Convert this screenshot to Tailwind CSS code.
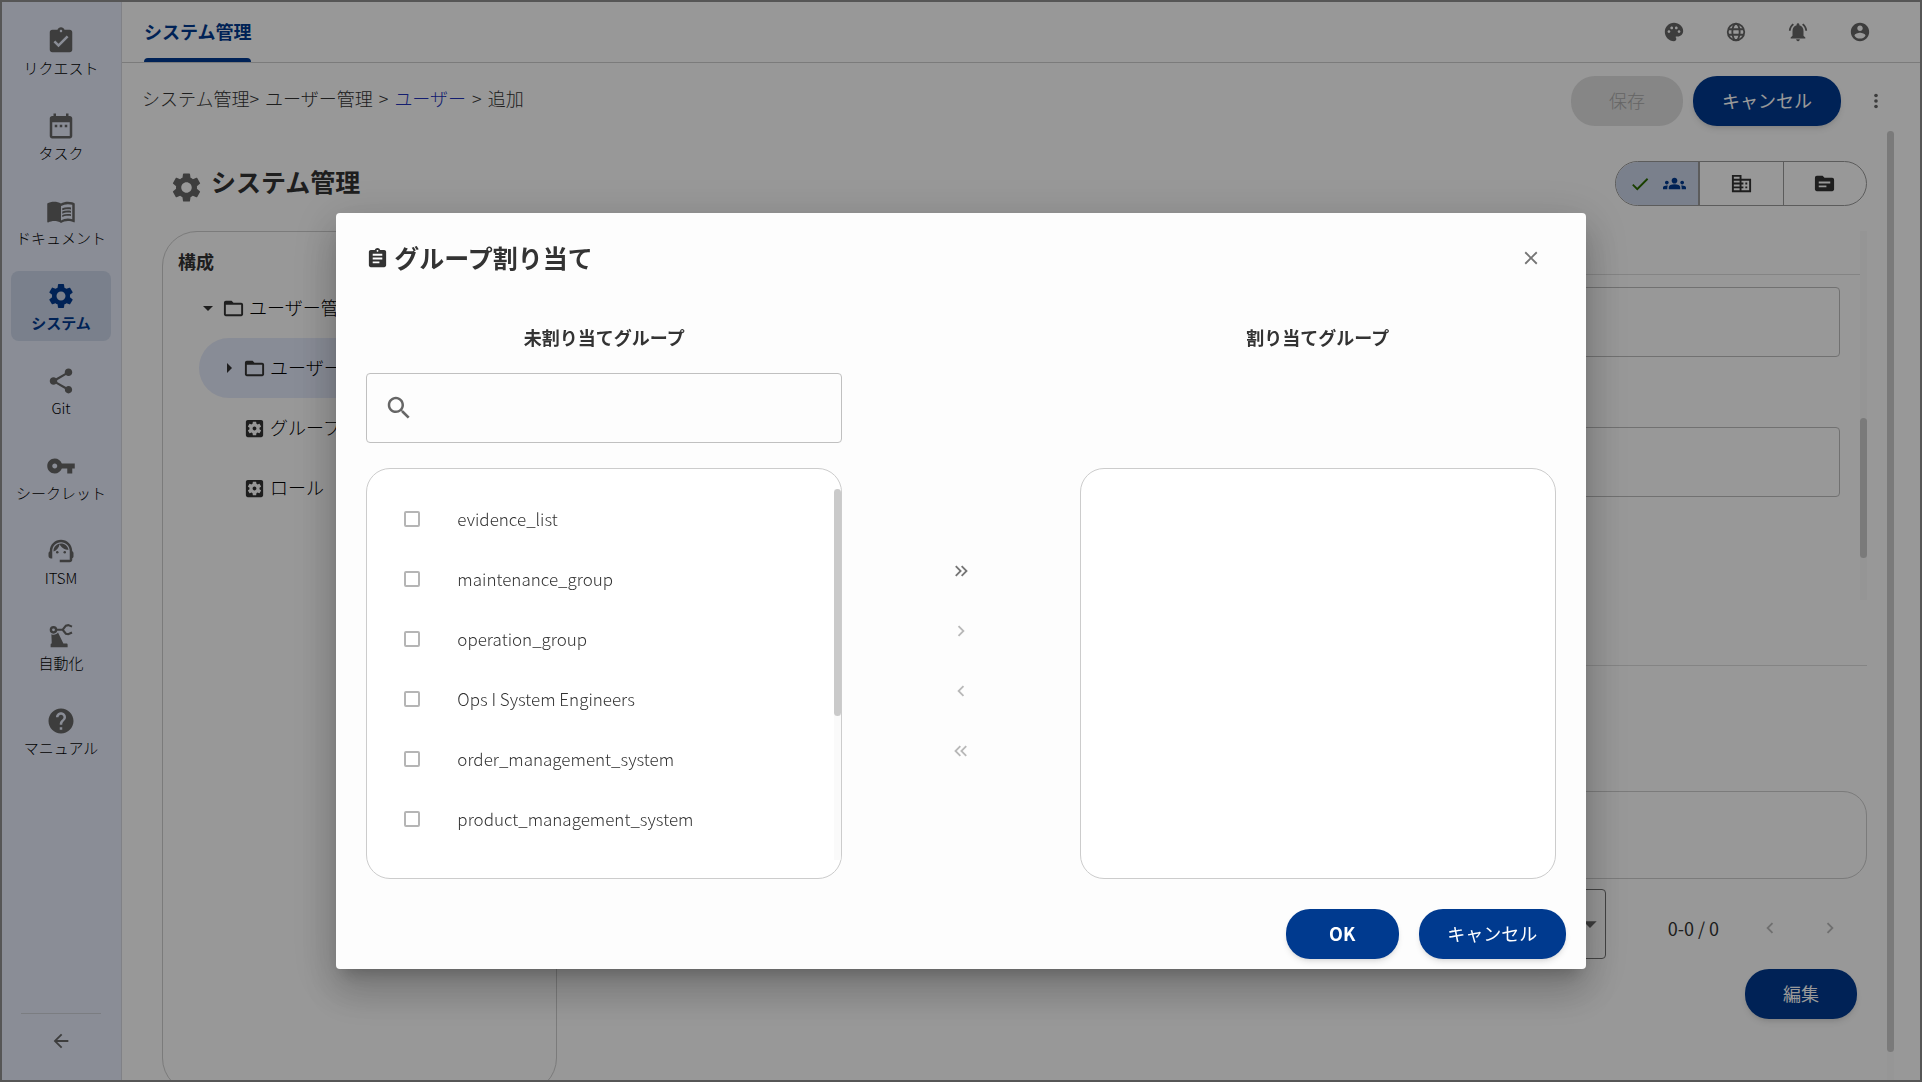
<!DOCTYPE html>
<html lang="ja">
<head>
<meta charset="utf-8">
<title>システム管理</title>
<script src="https://cdn.jsdelivr.net/npm/@tailwindcss/browser@4"></script>
</head>
<body class="bg-[#fdfdfd] font-['Noto_Sans_CJK_JP',sans-serif] text-lg leading-7 text-[#333]">

<svg class="hidden" aria-hidden="true">
  <symbol id="i-request" viewBox="0 0 24 24"><path d="M19 3h-4.18C14.4 1.84 13.3 1 12 1c-1.3 0-2.4.84-2.82 2H5c-1.1 0-2 .9-2 2v14c0 1.1.9 2 2 2h14c1.1 0 2-.9 2-2V5c0-1.1-.9-2-2-2zm-7 0c.55 0 1 .45 1 1s-.45 1-1 1-1-.45-1-1 .45-1 1-1zm-2 14l-4-4 1.41-1.41L10 14.17l6.59-6.59L18 9l-8 8z"/></symbol>
  <symbol id="i-assignment" viewBox="0 0 24 24"><path d="M19 3h-4.18C14.4 1.84 13.3 1 12 1c-1.3 0-2.4.84-2.82 2H5c-1.1 0-2 .9-2 2v14c0 1.1.9 2 2 2h14c1.1 0 2-.9 2-2V5c0-1.1-.9-2-2-2zm-7 0c.55 0 1 .45 1 1s-.45 1-1 1-1-.45-1-1 .45-1 1-1zm2 14H7v-2h7v2zm3-4H7v-2h10v2zm0-4H7V7h10v2z"/></symbol>
  <symbol id="i-task" viewBox="0 0 24 24"><path d="M9 11H7v2h2v-2zm4 0h-2v2h2v-2zm4 0h-2v2h2v-2zm2-7h-1V2h-2v2H8V2H6v2H5c-1.11 0-1.99.9-1.99 2L3 20c0 1.1.89 2 2 2h14c1.1 0 2-.9 2-2V6c0-1.1-.9-2-2-2zm0 16H5V9h14v11z"/></symbol>
  <symbol id="i-book" viewBox="0 0 24 24"><path d="M21 5c-1.11-.35-2.33-.5-3.5-.5-1.95 0-4.05.4-5.5 1.5-1.45-1.1-3.55-1.5-5.5-1.5S2.45 4.9 1 6v14.65c0 .25.25.5.5.5.1 0 .15-.05.25-.05C3.1 20.45 5.05 20 6.5 20c1.95 0 4.05.4 5.5 1.5 1.35-.85 3.8-1.5 5.5-1.5 1.65 0 3.35.3 4.75 1.05.1.05.15.05.25.05.25 0 .5-.25.5-.5V6c-.6-.45-1.25-.75-2-1zm0 13.5c-1.1-.35-2.3-.5-3.5-.5-1.7 0-4.15.65-5.5 1.5V8c1.35-.85 3.8-1.5 5.5-1.5 1.2 0 2.4.15 3.5.5v11.5z"/><path d="M17.5 10.5c.88 0 1.73.09 2.5.26V9.24c-.79-.15-1.64-.24-2.5-.24-1.7 0-3.24.29-4.5.83v1.66c1.13-.64 2.7-.99 4.5-.99zM13 12.49v1.66c1.13-.64 2.7-.99 4.5-.99.88 0 1.73.09 2.5.26V11.9c-.79-.15-1.64-.24-2.5-.24-1.7 0-3.24.3-4.5.83zm4.5 1.84c-1.7 0-3.24.29-4.5.83v1.66c1.13-.64 2.7-.99 4.5-.99.88 0 1.73.09 2.5.26v-1.52c-.79-.16-1.64-.24-2.5-.24z"/></symbol>
  <symbol id="i-gear" viewBox="0 0 24 24"><path d="M19.14 12.94c.04-.3.06-.61.06-.94 0-.32-.02-.64-.07-.94l2.03-1.58c.18-.14.23-.41.12-.61l-1.92-3.32c-.12-.22-.37-.29-.59-.22l-2.39.96c-.5-.38-1.03-.7-1.62-.94l-.36-2.54c-.04-.24-.24-.41-.48-.41h-3.84c-.24 0-.43.17-.47.41l-.36 2.54c-.59.24-1.13.57-1.62.94l-2.39-.96c-.22-.08-.47 0-.59.22L2.74 8.87c-.12.21-.08.47.12.61l2.03 1.58c-.05.3-.09.63-.09.94s.02.64.07.94l-2.03 1.58c-.18.14-.23.41-.12.61l1.92 3.32c.12.22.37.29.59.22l2.39-.96c.5.38 1.03.7 1.62.94l.36 2.54c.05.24.24.41.48.41h3.84c.24 0 .44-.17.47-.41l.36-2.54c.59-.24 1.13-.56 1.62-.94l2.39.96c.22.08.47 0 .59-.22l1.92-3.32c.12-.22.07-.47-.12-.61l-2.01-1.58zM12 15.6c-1.98 0-3.6-1.62-3.6-3.6s1.62-3.6 3.6-3.6 3.6 1.62 3.6 3.6-1.62 3.6-3.6 3.6z"/></symbol>
  <symbol id="i-share" viewBox="0 0 24 24"><path d="M18 16.08c-.76 0-1.44.3-1.96.77L8.91 12.7c.05-.23.09-.46.09-.7s-.04-.47-.09-.7l7.05-4.11c.54.5 1.25.81 2.04.81 1.66 0 3-1.34 3-3s-1.34-3-3-3-3 1.34-3 3c0 .24.04.47.09.7L8.04 9.81C7.5 9.31 6.79 9 6 9c-1.66 0-3 1.34-3 3s1.34 3 3 3c.79 0 1.5-.31 2.04-.81l7.12 4.16c-.05.21-.08.43-.08.65 0 1.61 1.31 2.92 2.92 2.92 1.61 0 2.92-1.31 2.92-2.92s-1.31-2.92-2.92-2.92z"/></symbol>
  <symbol id="i-key" viewBox="0 0 24 24"><path d="M12.65 10C11.83 7.67 9.61 6 7 6c-3.31 0-6 2.69-6 6s2.69 6 6 6c2.61 0 4.83-1.67 5.65-4H17v4h4v-4h2v-4H12.65zM7 14c-1.1 0-2-.9-2-2s.9-2 2-2 2 .9 2 2-.9 2-2 2z"/></symbol>
  <symbol id="i-agent" viewBox="0 0 24 24"><path d="M21 12.22C21 6.73 16.74 3 12 3c-4.69 0-9 3.65-9 9.28-.6.34-1 .98-1 1.72v2c0 1.1.9 2 2 2h1v-6.1c0-3.87 3.13-7 7-7s7 3.13 7 7V19h-8v2h8c1.1 0 2-.9 2-2v-1.22c.59-.31 1-.92 1-1.64v-2.3c0-.7-.41-1.31-1-1.62z"/><circle cx="9" cy="13" r="1"/><circle cx="15" cy="13" r="1"/><path d="M18 11.03C17.52 8.18 15.04 6 12.05 6c-3.03 0-6.29 2.51-6.03 6.45 2.47-1.01 4.33-3.21 4.86-5.89 1.31 2.63 4 4.44 7.12 4.47z"/></symbol>
  <symbol id="i-robot" viewBox="0 0 24 24"><path fill-rule="evenodd" d="M6 4a3 3 0 1 1 0 6.100a3 3 0 1 1 0-6.100zm0 1.900a1.100 1.100 0 1 0 0 2.300a1.100 1.100 0 1 0 0-2.300z"/><path d="M4.300 10.500c2 .9 4 .4 5.300-1.300L13.900 18h2.400c.6 0 1 .4 1 1v1.900H3.700V19c0-.6.300-1 .9-1z"/><path d="M8.300 7h4.700M20.800 4.500L17.800 3.300L15.900 3.700L13.300 7L15.900 10.200L17.800 10.600L20.800 9.200" fill="none" stroke="currentColor" stroke-width="1.700"/></symbol>
  <symbol id="i-help" viewBox="0 0 24 24"><path d="M12 2C6.48 2 2 6.48 2 12s4.480 10 10 10 10-4.480 10-10S17.520 2 12 2zm1 17h-2v-2h2v2zm2.070-7.750l-.9.920C13.450 12.900 13 13.500 13 15h-2v-.5c0-1.100.45-2.100 1.170-2.830l1.240-1.260c.37-.36.59-.86.59-1.410 0-1.100-.9-2-2-2s-2 .9-2 2H8c0-2.210 1.790-4 4-4s4 1.790 4 4c0 .88-.36 1.680-.93 2.250z"/></symbol>
  <symbol id="i-back" viewBox="0 0 24 24"><path d="M20 11H7.830l5.590-5.590L12 4l-8 8 8 8 1.410-1.410L7.830 13H20v-2z"/></symbol>
  <symbol id="i-palette" viewBox="0 0 24 24"><path d="M12 2C6.490 2 2 6.490 2 12s4.490 10 10 10c1.380 0 2.500-1.120 2.500-2.500 0-.61-.23-1.200-.64-1.670-.08-.1-.13-.21-.13-.33 0-.28.22-.5.5-.5H16c3.310 0 6-2.690 6-6 0-4.960-4.490-9-10-9zm5.500 11c-.83 0-1.500-.67-1.500-1.500s.67-1.500 1.500-1.500 1.500.67 1.500 1.500-.67 1.500-1.500 1.500zm-3-4c-.83 0-1.500-.67-1.500-1.500S13.670 6 14.500 6s1.500.67 1.500 1.500S15.330 9 14.500 9zM5 11.500c0-.83.67-1.500 1.500-1.500s1.500.67 1.500 1.500S7.330 13 6.500 13 5 12.330 5 11.500zm6-4c0 .83-.67 1.500-1.500 1.500S8 8.330 8 7.500 8.670 6 9.500 6s1.500.67 1.500 1.500z"/></symbol>
  <symbol id="i-globe" viewBox="0 0 24 24"><g fill="none" stroke="currentColor" stroke-width="2"><circle cx="12" cy="12" r="9"/><ellipse cx="12" cy="12" rx="4" ry="9"/><path d="M3.500 9h17M3.500 15h17"/></g></symbol>
  <symbol id="i-bell" viewBox="0 0 24 24"><path d="M7.580 4.080L6.150 2.650C3.750 4.480 2.170 7.300 2.030 10.500h2c.15-2.650 1.510-4.970 3.550-6.420zm12.390 6.420h2c-.15-3.200-1.730-6.020-4.120-7.850l-1.420 1.430c2.020 1.450 3.390 3.770 3.540 6.420zM18 11c0-3.070-1.640-5.640-4.500-6.320V4c0-.83-.67-1.500-1.500-1.500s-1.500.67-1.500 1.500v.68C7.630 5.360 6 7.920 6 11v5l-2 2v1h16v-1l-2-2v-5zm-6 11c.14 0 .27-.01.4-.04.65-.14 1.180-.58 1.440-1.180.1-.24.15-.5.15-.78h-4c.01 1.100.9 2 2.010 2z"/></symbol>
  <symbol id="i-account" viewBox="0 0 24 24"><path d="M12 2C6.480 2 2 6.480 2 12s4.480 10 10 10 10-4.480 10-10S17.520 2 12 2zm0 3c1.660 0 3 1.340 3 3s-1.340 3-3 3-3-1.340-3-3 1.340-3 3-3zm0 14.200c-2.500 0-4.710-1.280-6-3.220.03-1.990 4-3.080 6-3.080 1.990 0 5.970 1.090 6 3.080-1.290 1.940-3.500 3.220-6 3.220z"/></symbol>
  <symbol id="i-more" viewBox="0 0 24 24"><circle cx="12" cy="6" r="2"/><circle cx="12" cy="12" r="2"/><circle cx="12" cy="18" r="2"/></symbol>
  <symbol id="i-check" viewBox="0 0 24 24"><path d="M9 16.170L4.830 12l-1.420 1.410L9 19 21 7l-1.410-1.410z"/></symbol>
  <symbol id="i-groups" viewBox="0 0 24 24"><path d="M12 12.750c1.630 0 3.070.39 4.240.9 1.080.48 1.760 1.560 1.760 2.730V18H6v-1.610c0-1.180.68-2.260 1.760-2.730 1.170-.52 2.610-.91 4.240-.91zM4 13c1.100 0 2-.9 2-2s-.9-2-2-2-2 .9-2 2 .9 2 2 2zm1.130 1.100c-.37-.06-.74-.1-1.130-.1-.99 0-1.930.21-2.780.58C.48 14.900 0 15.620 0 16.430V18h4.500v-1.610c0-.83.23-1.610.63-2.290zM20 13c1.100 0 2-.9 2-2s-.9-2-2-2-2 .9-2 2 .9 2 2 2zm4 3.430c0-.81-.48-1.530-1.220-1.850-.85-.37-1.790-.58-2.780-.58-.39 0-.76.04-1.130.1.4.68.63 1.460.63 2.290V18H24v-1.570zM12 6c1.660 0 3 1.340 3 3s-1.340 3-3 3-3-1.340-3-3 1.340-3 3-3z"/></symbol>
  <symbol id="i-domain" viewBox="0 0 24 24"><path d="M12 7V3H2v18h20V7H12zM10 19H4v-2h6v2zm0-4H4v-2h6v2zm0-4H4V9h6v2zm0-4H4V5h6v2zm10 12h-8v-2h2v-2h-2v-2h2v-2h-2V9h8v10zm-2-8h-2v2h2v-2zm0 4h-2v2h2v-2z"/></symbol>
  <symbol id="i-topic" viewBox="0 0 24 24"><path d="M20 6h-8l-2-2H4c-1.100 0-1.990.9-1.990 2L2 18c0 1.100.9 2 2 2h16c1.100 0 2-.9 2-2V8c0-1.100-.9-2-2-2zm-6 10H6v-2h8v2zm4-4H6v-2h12v2z"/></symbol>
  <symbol id="i-folder" viewBox="0 0 24 24"><path d="M20 6h-8l-2-2H4c-1.100 0-1.990.9-1.990 2L2 18c0 1.100.9 2 2 2h16c1.100 0 2-.9 2-2V8c0-1.100-.9-2-2-2zm0 12H4V8h16v10z"/></symbol>
  <symbol id="i-app" viewBox="0 0 24 24"><path d="M12 10c-1.100 0-2 .9-2 2s.9 2 2 2 2-.9 2-2-.9-2-2-2zm7-7H5c-1.110 0-2 .9-2 2v14c0 1.100.89 2 2 2h14c1.110 0 2-.9 2-2V5c0-1.100-.89-2-2-2zm-1.750 9c0 .23-.02.46-.05.68l1.480 1.160c.13.11.17.3.08.45l-1.400 2.420c-.09.15-.27.21-.43.15l-1.740-.7c-.36.28-.76.51-1.180.69l-.26 1.850c-.03.17-.18.3-.35.3h-2.800c-.17 0-.32-.13-.35-.29l-.26-1.850c-.43-.18-.82-.41-1.180-.69l-1.740.7c-.16.06-.34 0-.43-.15l-1.400-2.420c-.09-.15-.05-.34.08-.45l1.480-1.160c-.03-.23-.05-.46-.05-.69 0-.23.02-.46.05-.68l-1.480-1.160c-.13-.11-.17-.3-.08-.45l1.400-2.420c.09-.15.27-.21.43-.15l1.740.7c.36-.28.76-.51 1.180-.69l.26-1.850c.03-.17.18-.3.35-.3h2.800c.17 0 .32.13.35.29l.26 1.850c.43.18.82.41 1.180.69l1.740-.7c.16-.06.34 0 .43.15l1.400 2.420c.09.15.05.34-.08.45l-1.480 1.160c.03.23.05.46.05.69z"/></symbol>
  <symbol id="i-down" viewBox="0 0 24 24"><path d="M7 10l5 5 5-5z"/></symbol>
  <symbol id="i-next" viewBox="0 0 24 24"><path d="M10 17l5-5-5-5z"/></symbol>
  <symbol id="i-right" viewBox="0 0 24 24"><path d="M8.590 16.590L13.170 12 8.590 7.410 10 6l6 6-6 6z"/></symbol>
  <symbol id="i-left" viewBox="0 0 24 24"><path d="M15.410 16.590L10.830 12l4.580-4.590L14 6l-6 6 6 6z"/></symbol>
  <symbol id="i-dright" viewBox="0 0 24 24"><path d="M5.590 7.410L7 6l6 6-6 6-1.410-1.410L10.170 12zM12 7.410L13.410 6l6 6-6 6L12 16.590 16.580 12z"/></symbol>
  <symbol id="i-dleft" viewBox="0 0 24 24"><path d="M18.410 7.410L17 6l-6 6 6 6 1.410-1.410L13.830 12zM12 7.410L10.590 6l-6 6 6 6L12 16.590 7.420 12z"/></symbol>
  <symbol id="i-close" viewBox="0 0 24 24"><path d="M19 6.410L17.590 5 12 10.590 6.410 5 5 6.410 10.590 12 5 17.590 6.410 19 12 13.410 17.590 19 19 17.590 13.410 12z"/></symbol>
  <symbol id="i-search" viewBox="0 0 24 24"><path d="M15.500 14h-.79l-.28-.27C15.410 12.590 16 11.110 16 9.500 16 5.910 13.090 3 9.500 3S3 5.910 3 9.500 5.910 16 9.500 16c1.610 0 3.090-.59 4.230-1.570l.27.28v.79l5 4.990L20.490 19l-4.990-5zm-6 0C7.010 14 5 11.990 5 9.500S7.010 5 9.500 5 14 7.010 14 9.500 11.990 14 9.500 14z"/></symbol>
</svg>

<div class="flex h-screen overflow-hidden border-2 border-[#8f8f8f]">

  <!-- Side navigation -->
  <nav class="flex w-30 shrink-0 flex-col items-center border-r border-[#d5d8e0] bg-[#e6ebfa] pt-[14px] pr-px text-[15px] leading-6 text-black" aria-label="メイン">
    <ul class="flex flex-col gap-[15px] font-light">
      <li><a href="#" class="flex h-[70px] w-[100px] flex-col items-center pt-[10px]"><svg class="size-[30px] fill-current text-[#666]"><use href="#i-request"/></svg>リクエスト</a></li>
      <li><a href="#" class="flex h-[70px] w-[100px] flex-col items-center pt-[10px]"><svg class="size-[30px] fill-current text-[#666]"><use href="#i-task"/></svg>タスク</a></li>
      <li><a href="#" class="flex h-[70px] w-[100px] flex-col items-center pt-[10px]"><svg class="size-[30px] fill-current text-[#666]"><use href="#i-book"/></svg>ドキュメント</a></li>
      <li><a href="#" aria-current="page" class="flex h-[70px] w-[100px] flex-col items-center rounded-lg bg-[#cbd5e9] pt-[10px] font-bold text-[#003a8f]"><svg class="size-[30px] fill-current"><use href="#i-gear"/></svg>システム</a></li>
      <li><a href="#" class="flex h-[70px] w-[100px] flex-col items-center pt-[10px]"><svg class="size-[30px] fill-current text-[#666]"><use href="#i-share"/></svg>Git</a></li>
      <li><a href="#" class="flex h-[70px] w-[100px] flex-col items-center pt-[10px]"><svg class="size-[30px] fill-current text-[#666]"><use href="#i-key"/></svg>シークレット</a></li>
      <li><a href="#" class="flex h-[70px] w-[100px] flex-col items-center pt-[10px]"><svg class="size-[30px] fill-current text-[#666]"><use href="#i-agent"/></svg>ITSM</a></li>
      <li><a href="#" class="flex h-[70px] w-[100px] flex-col items-center pt-[10px]"><svg class="size-[30px] fill-current text-[#666]"><use href="#i-robot"/></svg>自動化</a></li>
      <li><a href="#" class="flex h-[70px] w-[100px] flex-col items-center pt-[10px]"><svg class="size-[30px] fill-current text-[#666]"><use href="#i-help"/></svg>マニュアル</a></li>
    </ul>
    <div class="mt-auto flex w-20 justify-center border-t border-[#cdd0d8] pt-4 pb-7">
      <button type="button" aria-label="折りたたむ"><svg class="size-[22px] fill-current text-[#666]"><use href="#i-back"/></svg></button>
    </div>
  </nav>

  <div class="flex min-w-0 flex-1 flex-col">

    <header class="flex h-[61px] shrink-0 items-stretch justify-between border-b border-[#cdcdcd] pr-[29px] pl-[22px]">
      <a href="#" class="flex flex-col justify-between pt-[15px] font-bold text-[#003a8f]">システム管理<span class="h-1 rounded-t-sm bg-[#003a91]"></span></a>
      <div class="flex items-center text-[#666]">
        <button type="button" aria-label="テーマ" class="grid w-[62px] place-items-center"><svg class="size-[22px] fill-current"><use href="#i-palette"/></svg></button>
        <button type="button" aria-label="言語" class="grid w-[62px] place-items-center"><svg class="size-[22px] fill-current"><use href="#i-globe"/></svg></button>
        <button type="button" aria-label="通知" class="grid w-[62px] place-items-center"><svg class="size-[22px] fill-current"><use href="#i-bell"/></svg></button>
        <button type="button" aria-label="アカウント" class="grid w-[62px] place-items-center"><svg class="size-[22px] fill-current"><use href="#i-account"/></svg></button>
      </div>
    </header>

    <div class="flex h-[68px] shrink-0 items-center justify-between pt-2 pr-[33px] pl-5">
      <nav class="flex gap-[6px] pb-[6px] font-light text-[#333]" aria-label="パンくず"><span>システム管理&gt;</span><span>ユーザー管理</span><span>&gt;</span><a href="#" class="text-[#2233bb]">ユーザー</a><span>&gt;</span><span>追加</span></nav>
      <div class="flex items-center gap-[10px]">
        <button type="button" disabled class="h-[50px] w-28 rounded-3xl bg-[#dfdfdf] pb-[2px] font-light text-[#a9a9a9]">保存</button>
        <button type="button" class="h-[50px] w-37 rounded-3xl bg-[#003a8f] pb-[2px] text-white shadow-md">キャンセル</button>
        <button type="button" aria-label="その他" class="ml-[14px] text-[#666]"><svg class="size-[22px] fill-current"><use href="#i-more"/></svg></button>
      </div>
    </div>

    <div class="flex min-h-0 flex-1 pr-[26px] pl-5">
      <main class="flex min-w-0 flex-1 flex-col overflow-hidden px-5 pt-[30px]">
        <div class="flex h-[45px] shrink-0 items-center justify-between">
          <h1 class="flex items-center gap-[7px] pl-[7px] text-[25px] leading-8 font-bold"><svg class="mt-[7px] size-[35px] fill-current text-[#666]"><use href="#i-gear"/></svg><span class="pb-[5px]">システム管理</span></h1>
          <div class="flex h-[45px] w-[252px] overflow-hidden rounded-full border border-[#999]" role="group" aria-label="表示">
            <button type="button" aria-pressed="true" aria-label="グループ" class="flex flex-1 items-center justify-center gap-3 border-r-2 border-[#999] bg-[#cbd5e9]"><svg class="size-[22px] fill-current text-[#2b6a00]"><use href="#i-check"/></svg><svg class="size-[23px] fill-current text-[#003a8f]"><use href="#i-groups"/></svg></button>
            <button type="button" aria-label="組織" class="grid flex-1 place-items-center border-r border-[#999]"><svg class="size-[23px] fill-current"><use href="#i-domain"/></svg></button>
            <button type="button" aria-label="フォルダー" class="grid flex-1 place-items-center"><svg class="size-[23px] fill-current"><use href="#i-topic"/></svg></button>
          </div>
        </div>

        <div class="mt-[25px] flex items-start gap-[35px]">
          <section class="h-[862px] w-[395px] shrink-0 rounded-[35px] border border-[#cdcdcd] pl-[15px]">
            <h2 class="pt-[15px] font-bold">構成</h2>
            <ul class="mt-[3px] pr-4 pl-[21px] font-light text-black">
              <li class="-ml-[3px] flex h-15 items-center"><svg class="size-6 fill-current text-[#333]"><use href="#i-down"/></svg><svg class="ml-[2px] size-[23px] fill-current text-[#333]"><use href="#i-folder"/></svg><span class="ml-1 pb-[2px]">ユーザー管理</span></li>
              <li class="flex h-15 items-center rounded-[30px] bg-[#e3e9fa] pl-[18px]"><svg class="size-6 fill-current text-[#333]"><use href="#i-next"/></svg><svg class="ml-[2px] size-[23px] fill-current text-[#333]"><use href="#i-folder"/></svg><span class="ml-1 pb-[2px]">ユーザー</span></li>
              <li class="flex h-15 items-center pl-11"><svg class="size-[23px] fill-current text-[#333]"><use href="#i-app"/></svg><span class="ml-1 pb-[2px]">グループ</span></li>
              <li class="flex h-15 items-center pl-11"><svg class="size-[23px] fill-current text-[#333]"><use href="#i-app"/></svg><span class="ml-1 pb-[2px]">ロール</span></li>
            </ul>
          </section>

          <section class="min-w-0 flex-1">
            <div class="flex h-[369px]">
              <div class="flex-1 pt-[43px]">
                <div class="border-t border-[#dcdcdc] pt-3 pr-5 pl-5">
                  <input type="text" aria-label="ユーザーID" class="block h-[70px] w-full rounded border border-[#bcbcbc]">
                  <input type="text" aria-label="ユーザー名" class="mt-[70px] block h-[70px] w-full rounded border border-[#bcbcbc]">
                </div>
              </div>
              <div class="w-[7px] bg-[#f8f8f8] pt-[187px]"><div class="h-35 rounded-full bg-[#cbcbcb]"></div></div>
            </div>
            <div class="mt-[65px] border-t border-[#dcdcdc] pt-[125px]">
              <div class="h-22 rounded-3xl border border-[#cdcdcd]"></div>
            </div>
            <div class="mt-[10px] flex h-[70px] items-center justify-end pr-[22px]">
              <div class="relative mr-[62px]">
                <select aria-label="表示件数" class="block h-[70px] w-30 appearance-none rounded border border-[#707070] px-4"><option>20</option></select>
                <svg class="pointer-events-none absolute top-[19px] right-0 size-8 fill-current text-[#666]"><use href="#i-down"/></svg>
              </div>
              <span class="pt-2">0-0 / 0</span>
              <button type="button" disabled aria-label="前へ" class="ml-9 grid w-[30px] place-items-center pt-2 text-[#b9b9b9]"><svg class="size-[22px] fill-current"><use href="#i-left"/></svg></button>
              <button type="button" disabled aria-label="次へ" class="ml-[30px] grid w-[30px] place-items-center pt-2 text-[#b9b9b9]"><svg class="size-[22px] fill-current"><use href="#i-right"/></svg></button>
            </div>
            <div class="mt-[10px] flex justify-end pr-[10px]">
              <button type="button" class="h-[50px] w-28 rounded-3xl bg-[#003a8f] pb-[2px] text-white shadow-md">編集</button>
            </div>
          </section>
        </div>
      </main>
      <div class="w-[7px] bg-[#fafafa] pb-7"><div class="h-full rounded-full bg-[#cbcbcb]"></div></div>
    </div>
  </div>
</div>

<!-- Group assignment dialog -->
<div class="fixed inset-0 flex items-start justify-center bg-black/40 pt-[213px]">
  <div role="dialog" aria-modal="true" aria-labelledby="dialog-title" class="w-[65%] rounded bg-[#fdfdfd] pt-[30px] pb-[10px] shadow-[0_11px_15px_-7px_rgba(0,0,0,0.2),0_24px_38px_3px_rgba(0,0,0,0.14),0_9px_46px_8px_rgba(0,0,0,0.12)]">
    <div class="flex h-[30px] items-center justify-between pr-[44px] pl-[30px]">
      <h2 id="dialog-title" class="flex items-center gap-[5px] text-[25px] leading-[30px] font-bold"><svg class="size-[23px] fill-current"><use href="#i-assignment"/></svg><span class="pb-[2px]">グループ割り当て</span></h2>
      <button type="button" aria-label="閉じる"><svg class="size-[22px] fill-current text-[#757575]"><use href="#i-close"/></svg></button>
    </div>

    <div class="mt-[49px] grid grid-cols-[2fr_1fr_2fr] px-[30px]">
      <h3 class="text-center leading-[30px] font-bold">未割り当てグループ</h3>
      <span></span>
      <h3 class="text-center leading-[30px] font-bold">割り当てグループ</h3>

      <label class="mt-[21px] flex h-[70px] items-center rounded border border-[#c0c0c0] px-[17px]">
        <svg class="size-[30px] shrink-0 fill-current text-[#666]"><use href="#i-search"/></svg>
        <input type="search" aria-label="グループを検索" class="ml-3 min-w-0 flex-1 outline-none">
      </label>
      <span></span>
      <span></span>

      <div class="mt-[25px] flex h-[411px] overflow-hidden rounded-3xl border border-[#ccc] bg-white pt-5 pb-[18px]">
        <ul class="flex-1 overflow-hidden pl-[37px] text-[17px] font-light">
          <li><label class="flex h-15 items-center gap-[37px]"><input type="checkbox" class="size-4 appearance-none rounded-[2px] border-2 border-[#b5b5b5]">evidence_list</label></li>
          <li><label class="flex h-15 items-center gap-[37px]"><input type="checkbox" class="size-4 appearance-none rounded-[2px] border-2 border-[#b5b5b5]">maintenance_group</label></li>
          <li><label class="flex h-15 items-center gap-[37px]"><input type="checkbox" class="size-4 appearance-none rounded-[2px] border-2 border-[#b5b5b5]">operation_group</label></li>
          <li><label class="flex h-15 items-center gap-[37px]"><input type="checkbox" class="size-4 appearance-none rounded-[2px] border-2 border-[#b5b5b5]">Ops I System Engineers</label></li>
          <li><label class="flex h-15 items-center gap-[37px]"><input type="checkbox" class="size-4 appearance-none rounded-[2px] border-2 border-[#b5b5b5]">order_management_system</label></li>
          <li><label class="flex h-15 items-center gap-[37px]"><input type="checkbox" class="size-4 appearance-none rounded-[2px] border-2 border-[#b5b5b5]">product_management_system</label></li>
        </ul>
        <div class="w-[7px] bg-[#fafafa]"><div class="h-[227px] rounded-full bg-[#cacaca]"></div></div>
      </div>
      <div class="mt-[98px] flex flex-col items-center text-[#b8b8b8]">
        <button type="button" aria-label="すべて割り当て" class="grid h-15 w-15 place-items-center text-[#757575]"><svg class="size-[22px] fill-current"><use href="#i-dright"/></svg></button>
        <button type="button" disabled aria-label="割り当て" class="grid h-15 w-15 place-items-center"><svg class="size-[22px] fill-current"><use href="#i-right"/></svg></button>
        <button type="button" disabled aria-label="解除" class="grid h-15 w-15 place-items-center"><svg class="size-[22px] fill-current"><use href="#i-left"/></svg></button>
        <button type="button" disabled aria-label="すべて解除" class="grid h-15 w-15 place-items-center"><svg class="size-[22px] fill-current"><use href="#i-dleft"/></svg></button>
      </div>
      <div class="mt-[25px] h-[411px] rounded-3xl border border-[#ccc] bg-white"></div>
    </div>

    <div class="mt-[30px] flex justify-end gap-5 pr-5">
      <button type="button" class="h-[50px] w-[113px] rounded-3xl bg-[#003a8f] pb-[2px] font-bold text-white shadow-md">OK</button>
      <button type="button" class="h-[50px] w-[147px] rounded-3xl bg-[#003a8f] pb-[2px] text-white shadow-md">キャンセル</button>
    </div>
  </div>
</div>
</body>
</html>
